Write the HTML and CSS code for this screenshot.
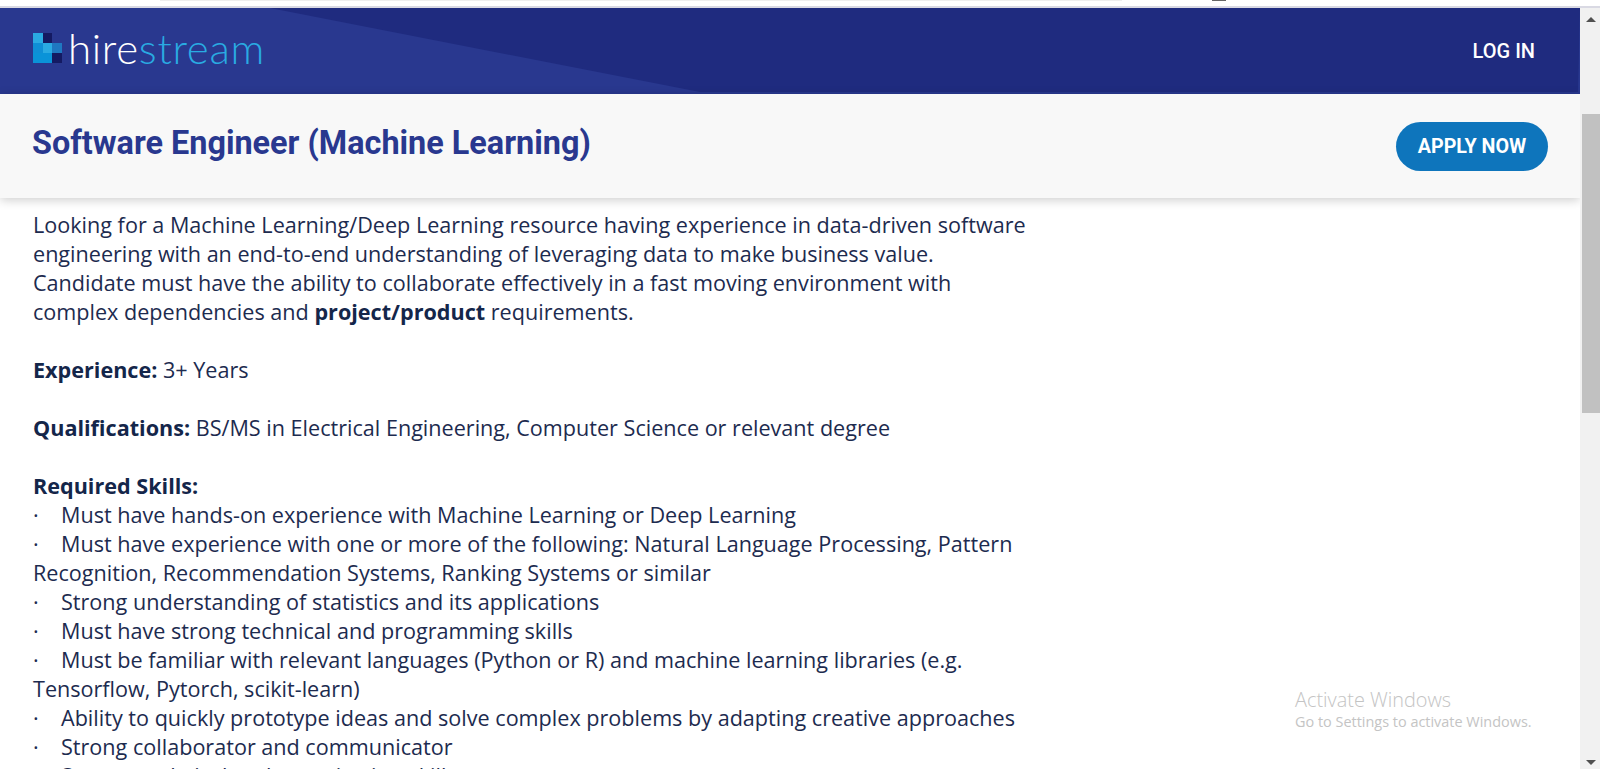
FILE: index.html
```html
<!DOCTYPE html>
<html lang="en">
<head>
    <meta charset="UTF-8">
    <meta name="viewport" content="width=device-width, initial-scale=1.0">
    <title>Software Engineer (Machine Learning)</title>
    <link rel="stylesheet" href="styles.css">
</head>
<body>

<div class="top-strip">
    <div class="top-strip-edge"></div>
    <div class="top-strip-mark"></div>
</div>

<div class="window">
    <div class="page">
        <header class="site-header">
            <a class="logo" href="#">
                <svg class="logo-mark" width="29" height="30" viewBox="0 0 29 30">
                    <rect x="0" y="0" width="10" height="10" fill="#2aaae2"/>
                    <rect x="10" y="0" width="9" height="10" fill="#141a62"/>
                    <rect x="0" y="10" width="10" height="10" fill="#0f8fd6"/>
                    <rect x="10" y="10" width="9" height="10" fill="#2aaae2"/>
                    <rect x="19" y="10" width="10" height="10" fill="#1f78c1"/>
                    <rect x="0" y="20" width="19" height="10" fill="#0a93d8"/>
                    <rect x="19" y="20" width="10" height="10" fill="#141a62"/>
                </svg>
                <span class="logo-text">hire<span class="logo-accent">stream</span></span>
            </a>
            <a class="login" href="#">LOG IN</a>
        </header>

        <div class="job-bar">
            <h1>Software Engineer (Machine Learning)</h1>
            <button type="button" class="apply">APPLY NOW</button>
        </div>

        <main class="job-body">
            <p>Looking for a Machine Learning/Deep Learning resource having experience in data-driven software engineering with an end-to-end understanding of leveraging data to make business value. Candidate must have the ability to collaborate effectively in a fast moving environment with complex dependencies and <b>project/product</b> requirements.</p>
            <p><b>Experience:</b> 3+ Years</p>
            <p><b>Qualifications:</b> BS/MS in Electrical Engineering, Computer Science or relevant degree</p>
            <p><b>Required Skills:</b><br>
            <span class="dot">·</span>Must have hands-on experience with Machine Learning or Deep Learning<br>
            <span class="dot">·</span>Must have experience with one or more of the following: Natural Language Processing, Pattern Recognition, Recommendation Systems, Ranking Systems or similar<br>
            <span class="dot">·</span>Strong understanding of statistics and its applications<br>
            <span class="dot">·</span>Must have strong technical and programming skills<br>
            <span class="dot">·</span>Must be familiar with relevant languages (Python or R) and machine learning libraries (e.g. Tensorflow, Pytorch, scikit-learn)<br>
            <span class="dot">·</span>Ability to quickly prototype ideas and solve complex problems by adapting creative approaches<br>
            <span class="dot">·</span>Strong collaborator and communicator<br>
            <span class="dot">·</span>Strong analytical and organization skills</p>
        </main>

        <div class="activate">
            <div class="activate-title">Activate Windows</div>
            <div class="activate-sub">Go to Settings to activate Windows.</div>
        </div>
    </div>

    <div class="scrollbar">
        <div class="arrow-up"></div>
        <div class="track"><div class="thumb"></div></div>
        <div class="arrow-down"></div>
    </div>
</div>

</body>
</html>
```

FILE: styles.css
```css
html, body {
    margin: 0;
    height: 100%;
    overflow: hidden;
}

body {
    font-family: "Open Sans", sans-serif;
    background-color: #fff;
    display: flex;
    flex-direction: column;
}

.top-strip {
    height: 6px;
    background-color: #fff;
    border-bottom: 2px solid #d9d9e3;
    position: relative;
}

.top-strip-edge {
    position: absolute;
    left: 160px;
    top: 0;
    width: 962px;
    height: 1px;
    background-color: #eee;
}

.top-strip-mark {
    position: absolute;
    left: 1212px;
    top: 0;
    width: 14px;
    height: 1px;
    background-color: #666;
}

.window {
    flex: 1;
    min-height: 0;
    display: flex;
}

.page {
    flex: 1;
    min-width: 0;
    position: relative;
    overflow: hidden;
}

.site-header {
    height: 86px;
    padding: 0 45px 0 33px;
    background-color: #29388f;
    display: flex;
    align-items: center;
    justify-content: space-between;
    position: relative;
}

.site-header::before {
    content: "";
    position: absolute;
    inset: 0;
    background-color: #1f2b7f;
    clip-path: polygon(270px 0, 100% 0, 1578px 84px, 700px 84px);
}

.logo {
    display: flex;
    align-items: center;
    gap: 6px;
    text-decoration: none;
    position: relative;
    margin-bottom: 6px;
}

.logo-text {
    font-family: Lato, sans-serif;
    font-weight: 300;
    font-size: 42px;
    line-height: 40px;
    letter-spacing: 0.7px;
    color: #fff;
}

.logo-accent {
    color: #29abe2;
}

.login {
    font-family: Roboto, sans-serif;
    font-weight: 500;
    font-size: 20px;
    color: #fff;
    text-decoration: none;
    position: relative;
}

.job-bar {
    height: 104px;
    padding: 0 32px;
    background-color: #f8f8f8;
    box-shadow: 0 2px 10px rgba(0, 0, 0, 0.2);
    display: flex;
    align-items: center;
    justify-content: space-between;
    position: relative;
}

.job-bar h1 {
    margin: 0 0 6px;
    font-family: Roboto, sans-serif;
    font-weight: 700;
    font-size: 32.4px;
    color: #29388f;
}

.apply {
    width: 152px;
    height: 49px;
    border: 0;
    border-radius: 25px;
    background-color: #0e75bc;
    color: #fff;
    font-family: Roboto, sans-serif;
    font-weight: 700;
    font-size: 19.7px;
}

.job-body {
    width: 1000px;
    padding: 12px 32px 0 33px;
    font-size: 21.6px;
    line-height: 29px;
    color: #1d2b4f;
}

.job-body p {
    margin: 0 0 29px;
}

.job-body b {
    color: #14264a;
}

.dot {
    display: inline-block;
    width: 28px;
}

.activate {
    position: absolute;
    left: 1295px;
    top: 680px;
    color: #c4c4c4;
    font-family: "Open Sans", sans-serif;
}

.activate-title {
    font-size: 19.9px;
    font-weight: 300;
    line-height: 24px;
}

.activate-sub {
    font-size: 14.45px;
    line-height: 20px;
}

.scrollbar {
    width: 20px;
    padding-left: 2px;
    box-sizing: border-box;
    background-color: #f1f1f1;
    display: flex;
    flex-direction: column;
    align-items: center;
}

.arrow-up {
    margin: 9px 0;
    border: 5px solid transparent;
    border-top: 0;
    border-bottom: 5px solid #505050;
}

.arrow-down {
    margin: 8px 0 4px;
    border: 5px solid transparent;
    border-bottom: 0;
    border-top: 5px solid #505050;
}

.track {
    flex: 1;
    width: 100%;
}

.thumb {
    height: 299px;
    margin-top: 83px;
    background-color: #c1c1c1;
}
```
